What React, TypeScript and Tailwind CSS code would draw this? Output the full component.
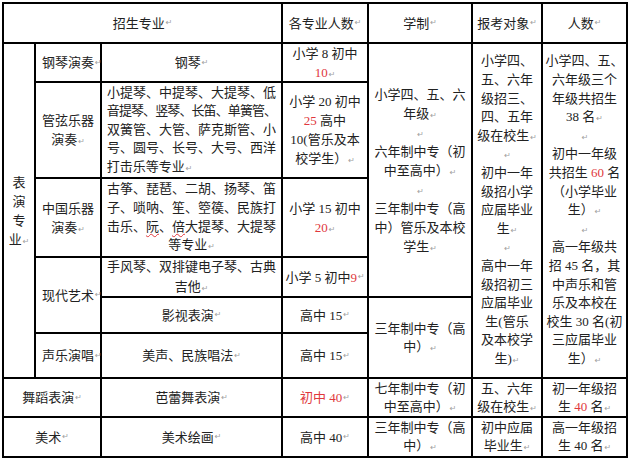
import type { ReactNode } from 'react'

const R = ({ children }: { children: ReactNode }) => <span className="text-[#e0383c]">{children}</span>

// Word paragraph mark
const M = () => (
  <span className="font-['DejaVu_Sans',sans-serif] text-[8px] leading-[0] text-[#a0a0a0] ml-px">{'↵'}</span>
)

const Wavy = ({ children }: { children: ReactNode }) => (
  <span className="underline decoration-wavy decoration-[#e0383c] decoration-1 underline-offset-2">{children}</span>
)

function Lines({ lines, lead = 'leading-[19px]' }: { lines: ReactNode[]; lead?: string }) {
  return (
    <div className={`${lead} text-center`}>
      {lines.map((l, i) => (
        <div key={i} className="whitespace-nowrap">
          {l}
        </div>
      ))}
    </div>
  )
}

const cell = 'bg-white flex items-center justify-center whitespace-nowrap leading-[19px]'
const left = 'bg-white flex items-center justify-start pl-[6px] whitespace-nowrap leading-[19px]'

export default function App() {
  return (
    <div className="w-[632px] h-[460px] bg-white overflow-hidden pt-[2px] pl-[2px] text-[13px] text-[#222] font-['Liberation_Serif','Noto_Sans_CJK_SC',serif]">
      <div className="inline-grid bg-black p-[2px] gap-[2px] grid-cols-[30px_64px_179px_84px_102px_68px_83px] grid-rows-[38px_37px_94px_77px_38px_34px_43px_37px_38px]">
        {/* header */}
        <div className={`${cell} col-start-1 col-span-3 row-start-1`}>
          招生专业<M />
        </div>
        <div className={`${cell} col-start-4 row-start-1`}>
          各专业人数<M />
        </div>
        <div className={`${cell} col-start-5 row-start-1`}>
          学制<M />
        </div>
        <div className={`${cell} col-start-6 row-start-1`}>
          报考对象<M />
        </div>
        <div className={`${cell} col-start-7 row-start-1`}>
          人数<M />
        </div>

        {/* 表演专业 */}
        <div className={`${cell} col-start-1 row-start-2 row-span-6`}>
          <Lines lines={['表', '演', '专', <>业<M /></>]} />
        </div>

        <div className={`${left} col-start-2 row-start-2`}>
          钢琴演奏<M />
        </div>
        <div className={`${cell} col-start-3 row-start-2`}>
          钢琴<M />
        </div>
        <div className={`${cell} col-start-4 row-start-2`}>
          <Lines lines={['小学 8 初中', <><R>10</R><M /></>]} />
        </div>

        <div className={`${cell} col-start-5 row-start-2 row-span-4`}>
          <Lines
            lines={[
              '小学四、五、六',
              <>年级<M /></>,
              <M />,
              '六年制中专（初',
              <>中至高中）<M /></>,
              <M />,
              '三年制中专（高',
              '中）管乐及本校',
              <>学生<M /></>,
            ]}
          />
        </div>
        <div className={`${cell} col-start-6 row-start-2 row-span-6`}>
          <Lines
            lead="leading-[18.6px]"
            lines={[
              '小学四、',
              '五、六年',
              '级招三、',
              '四、五年',
              <>级在校生<M /></>,
              <M />,
              '初中一年',
              '级招小学',
              '应届毕业',
              <>生<M /></>,
              <M />,
              '高中一年',
              '级招初三',
              '应届毕业',
              '生(管乐',
              '及本校学',
              <>生)<M /></>,
            ]}
          />
        </div>
        <div className={`${cell} col-start-7 row-start-2 row-span-6`}>
          <Lines
            lead="leading-[18.6px]"
            lines={[
              '小学四、五、',
              '六年级三个',
              '年级共招生',
              <>38 名<M /></>,
              <M />,
              '初中一年级',
              <>共招生 <R>60</R> 名</>,
              '（小学毕业',
              <>生）<M /></>,
              <M />,
              '高一年级共',
              '招 45 名，其',
              '中声乐和管',
              '乐及本校在',
              '校生 30 名(初',
              '三应届毕业',
              <>生）<M /></>,
            ]}
          />
        </div>

        {/* 管弦乐器 */}
        <div className={`${left} col-start-2 row-start-3`}>
          <Lines lines={['管弦乐器', <>演奏<M /></>]} />
        </div>
        <div className={`${cell} col-start-3 row-start-3`}>
          <Lines
            lead="leading-[18.4px]"
            lines={[
              '小提琴、中提琴、大提琴、低',
              <span className="tracking-[-0.9px]">音提琴、竖琴、长笛、单簧管、</span>,
              '双簧管、大管、萨克斯管、小',
              '号、圆号、长号、大号、西洋',
              <div className="text-left">
                打击乐等专业<M />
              </div>,
            ]}
          />
        </div>
        <div className={`${cell} col-start-4 row-start-3`}>
          <Lines lines={['小学 20 初中', <><R>25</R> 高中</>, '10(管乐及本', <>校学生）<M /></>]} />
        </div>

        {/* 中国乐器 */}
        <div className={`${left} col-start-2 row-start-4`}>
          <Lines lines={['中国乐器', <>演奏<M /></>]} />
        </div>
        <div className={`${cell} col-start-3 row-start-4`}>
          <Lines
            lead="leading-[18.6px]"
            lines={[
              '古筝、琵琶、二胡、扬琴、笛',
              '子、唢呐、笙、箜篌、民族打',
              <>
                击乐、<Wavy>阮</Wavy>、<Wavy>倍</Wavy>大提琴、大提琴
              </>,
              <>等专业<M /></>,
            ]}
          />
        </div>
        <div className={`${cell} col-start-4 row-start-4`}>
          <Lines lines={['小学 15 初中', <><R>20</R><M /></>]} />
        </div>

        {/* 现代艺术 */}
        <div className={`${left} col-start-2 row-start-5 row-span-2`}>
          现代艺术<M />
        </div>
        <div className={`${cell} col-start-3 row-start-5`}>
          <Lines lead="leading-[20px]" lines={['手风琴、双排键电子琴、古典', <>吉他<M /></>]} />
        </div>
        <div className={`${cell} col-start-4 row-start-5`}>
          小学 5 初中 <R>9</R><M />
        </div>

        <div className={`${cell} col-start-3 row-start-6`}>
          影视表演<M />
        </div>
        <div className={`${cell} col-start-4 row-start-6`}>
          高中 15<M />
        </div>
        <div className={`${cell} col-start-5 row-start-6 row-span-2`}>
          <Lines lead="leading-[18px]" lines={['三年制中专（高', <>中）<M /></>]} />
        </div>

        {/* 声乐演唱 */}
        <div className={`${left} col-start-2 row-start-7`}>
          声乐演唱<M />
        </div>
        <div className={`${cell} col-start-3 row-start-7`}>
          美声、民族唱法<M />
        </div>
        <div className={`${cell} col-start-4 row-start-7`}>
          高中 15<M />
        </div>

        {/* 舞蹈表演 */}
        <div className={`${cell} col-start-1 col-span-2 row-start-8`}>
          舞蹈表演<M />
        </div>
        <div className={`${cell} col-start-3 row-start-8`}>
          芭蕾舞表演<M />
        </div>
        <div className={`${cell} col-start-4 row-start-8`}>
          <R>初中 40</R>
          <M />
        </div>
        <div className={`${cell} col-start-5 row-start-8`}>
          <Lines lead="leading-[18px]" lines={['七年制中专（初', <>中至高中）<M /></>]} />
        </div>
        <div className={`${cell} col-start-6 row-start-8`}>
          <Lines lead="leading-[18px]" lines={['五、六年', <>级在校生<M /></>]} />
        </div>
        <div className={`${cell} col-start-7 row-start-8`}>
          <Lines lead="leading-[18px]" lines={['初一年级招', <>生 <R>40</R> 名<M /></>]} />
        </div>

        {/* 美术 */}
        <div className={`${cell} col-start-1 col-span-2 row-start-9`}>
          美术<M />
        </div>
        <div className={`${cell} col-start-3 row-start-9`}>
          美术绘画<M />
        </div>
        <div className={`${cell} col-start-4 row-start-9`}>
          高中 40<M />
        </div>
        <div className={`${cell} col-start-5 row-start-9`}>
          <Lines lead="leading-[18px]" lines={['三年制中专（高', <>中）<M /></>]} />
        </div>
        <div className={`${cell} col-start-6 row-start-9`}>
          <Lines lead="leading-[18px]" lines={['初中应届', <>毕业生<M /></>]} />
        </div>
        <div className={`${cell} col-start-7 row-start-9`}>
          <Lines lead="leading-[18px]" lines={['高一年级招', <>生 40 名<M /></>]} />
        </div>
      </div>
    </div>
  )
}
